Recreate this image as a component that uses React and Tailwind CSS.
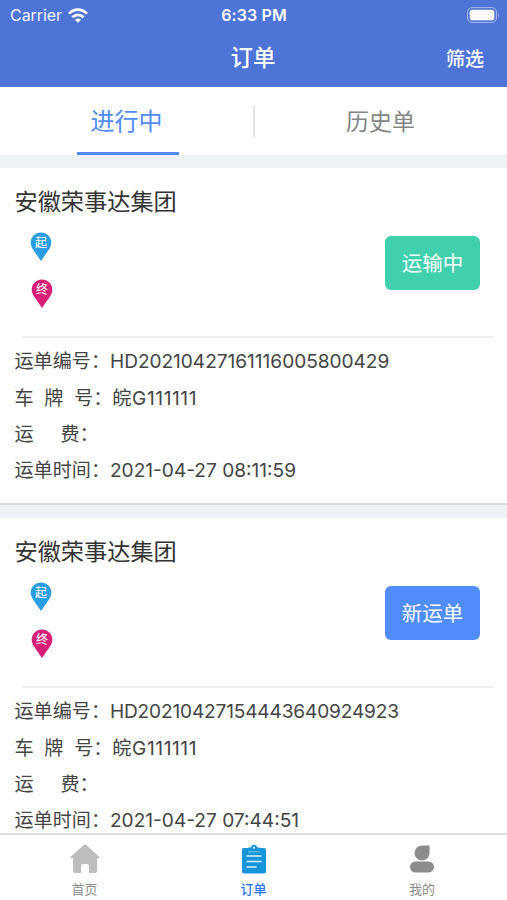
const orders = [
  {
    company: "安徽荣事达集团",
    status: "运输中",
    statusClass: "bg-[#40d0ad]",
    code: "HD20210427161116005800429",
    codeClass: "tracking-[-0.03px]",
    plate: "皖G111111",
    time: "2021-04-27 08:11:59",
  },
  {
    company: "安徽荣事达集团",
    status: "新运单",
    statusClass: "bg-[#508cfa]",
    code: "HD20210427154443640924923",
    codeClass: "tracking-[-0.17px]",
    plate: "皖G111111",
    time: "2021-04-27 07:44:51",
  },
]

function StatusBar() {
  return (
    <div className="grid h-[30px] grid-cols-3 items-center pl-[10px] pr-[7px] text-[16px] leading-none">
      <div className="flex items-center gap-[6px] text-white/90">
        <span className="tracking-[-0.05px]">Carrier</span>
        <svg width="20" height="15" viewBox="0 0 20 15" fill="none" stroke="#fff" strokeWidth="2.7">
          <path d="M1 5.6C6.2.4 13.800.4 19 5.600" />
          <path d="M4.400 9.200C7.600 6.100 12.400 6.100 15.600 9.200" />
          <path d="M10 14.800L6.900 11.700Q10 9.300 13.100 11.700Z" fill="#fff" stroke="none" />
        </svg>
      </div>
      <div className="pr-[2px] text-center font-semibold tracking-[0.1px]">6:33 PM</div>
      <svg className="justify-self-end" width="33" height="16" viewBox="0 0 33 16">
        <rect x=".6" y=".6" width="28.800" height="14.800" rx="4.400" fill="none" stroke="#fff" strokeOpacity=".5" />
        <rect x="2.700" y="2.700" width="24.600" height="10.600" rx="2.600" fill="#fff" />
        <path d="M31 5.500q1.600 2.500 0 5z" fill="#fff" fillOpacity=".6" />
      </svg>
    </div>
  )
}

function Header() {
  return (
    <header className="h-[87px] bg-[#4e74d7] text-white">
      <StatusBar />
      <div className="grid h-[57px] grid-cols-3 items-start">
        <h1 className="col-start-2 pr-px text-center text-[22.500px] font-medium leading-[55px]">订单</h1>
        <button className="justify-self-end pr-[23px] text-[19px] font-medium leading-[60px]">筛选</button>
      </div>
    </header>
  )
}

function Tabs() {
  return (
    <div className="flex h-[68px] items-start bg-white text-[24px] leading-[70px]">
      <div className="flex h-full flex-1 justify-center pl-[2px]">
        <button className="h-[68px] w-[102px] border-b-[3px] border-[#508cf2] pr-[2px] text-[#508cf2]">进行中</button>
      </div>
      <div className="mt-[18px] h-[32px] w-[2px] bg-[#e4e4e4]" />
      <button className="flex-1 pr-px text-[23px] text-[#858585]">历史单</button>
    </div>
  )
}

function Pin({ text, color, className }) {
  return (
    <svg className={className} width="22" height="30" viewBox="0 0 22 30">
      <path d="M11 .5C5.200.5.700 5 .7 10.500c0 2.500.9 4.500 2 6.500L11 29l8.300-12c1.100-2 2-4 2-6.500C21.300 5 16.800.5 11 .5z" fill={color} />
      <text x="11" y="15" textAnchor="middle" fontSize="12" fontWeight="500" fill="#fff" fillOpacity=".9">
        {text}
      </text>
    </svg>
  )
}

function Row({ label, value, valueClass = "" }) {
  return (
    <div className="h-[36.400px] whitespace-pre leading-[36px]">
      {label}
      <span className={valueClass}>{value}</span>
    </div>
  )
}

function OrderCard({ order }) {
  return (
    <section className="h-[337px] shrink-0 border-b-2 border-[#d6dcde] bg-white pl-[14.500px] pr-[15px] pt-[15px]">
      <h2 className="h-[38px] text-[23.200px] leading-[39px] text-[#333]">{order.company}</h2>
      <div className="flex h-[115px] items-start justify-between pl-[16px] pr-[12px] pt-[11px]">
        <div className="flex flex-col gap-[17px]">
          <Pin className="-ml-px" text="起" color="#2b9de3" />
          <Pin text="终" color="#d71f78" />
        </div>
        <button
          className={`mt-[4px] h-[54px] w-[95px] rounded-[6px] pt-[2px] text-[20.500px] text-white ${order.statusClass}`}
        >
          {order.status}
        </button>
      </div>
      <div className="ml-[7px] mr-[-2px] h-[2px] bg-[#f0f0f0]" />
      <div className="pt-[5.300px] text-[19.100px] text-[#444]">
        <Row label="运单编号：" value={order.code} valueClass={order.codeClass} />
        <Row label="车  牌  号：" value={order.plate} valueClass="tracking-[0.600px]" />
        <Row label="运     费：" value="" />
        <Row label="运单时间：" value={order.time} />
      </div>
    </section>
  )
}

function HomeIcon() {
  return (
    <svg width="30" height="30" viewBox="0 0 30 30" fill="#bdbdbd">
      <path d="M13.500 1.200q1.500-1.200 3 0L29 12.500q1.200 1.700-.8 1.700H27V27q0 2-2 2h-6v-7q0-2-2-2h-4q-2 0-2 2v7H5q-2 0-2-2V14.200H1.800q-2 0-.8-1.700z" />
    </svg>
  )
}

function OrderIcon() {
  return (
    <svg width="30" height="30" viewBox="0 0 30 30">
      <rect x="3" y="4" width="24" height="25.500" rx="1.800" fill="#1795db" />
      <path d="M9 7.500V4.500q0-1 1-1h1.500Q12.500.8 15 .8t3.500 2.700H20q1 0 1 1v3z" fill="#1795db" />
      <path d="M9 7.800h12" stroke="#8fcdf0" strokeWidth=".8" />
      <circle cx="15" cy="3.800" r="1" fill="#fff" />
      <path d="M7.500 12h15M7.500 17.500h15M7.500 23h10" stroke="#d9effb" strokeWidth="1.600" />
    </svg>
  )
}

function UserIcon() {
  return (
    <svg width="30" height="30" viewBox="0 0 30 30" fill="#8c8c8c">
      <path d="M22.500 1.500V9a7.500 7.500 0 1 1-7.500-7.500z" />
      <rect x="3" y="17.500" width="24" height="11" rx="5.500" />
    </svg>
  )
}

function TabBar() {
  return (
    <nav className="grid h-[67px] shrink-0 grid-cols-3 border-t-2 border-[#dedede] bg-white text-[13px] leading-[18px]">
      <div className="flex flex-col items-center gap-[6px] pt-[9px] text-[#8c8c8c]">
        <HomeIcon />
        首页
      </div>
      <div className="flex flex-col items-center gap-[6px] pt-[9px] font-medium text-[#247af4]">
        <OrderIcon />
        订单
      </div>
      <div className="flex flex-col items-center gap-[6px] pr-px pt-[9px] text-[#8c8c8c]">
        <UserIcon />
        我的
      </div>
    </nav>
  )
}

export default function App() {
  return (
    <div
      lang="zh-CN"
      className="flex h-[900px] w-[507px] flex-col overflow-hidden bg-[#ecf2f6] font-['Inter','Noto_Sans_CJK_SC',sans-serif]"
    >
      <Header />
      <Tabs />
      <main className="flex min-h-0 flex-1 flex-col gap-[13px] overflow-hidden pt-[13px]">
        {orders.map((order) => (
          <OrderCard key={order.code} order={order} />
        ))}
      </main>
      <TabBar />
    </div>
  )
}
